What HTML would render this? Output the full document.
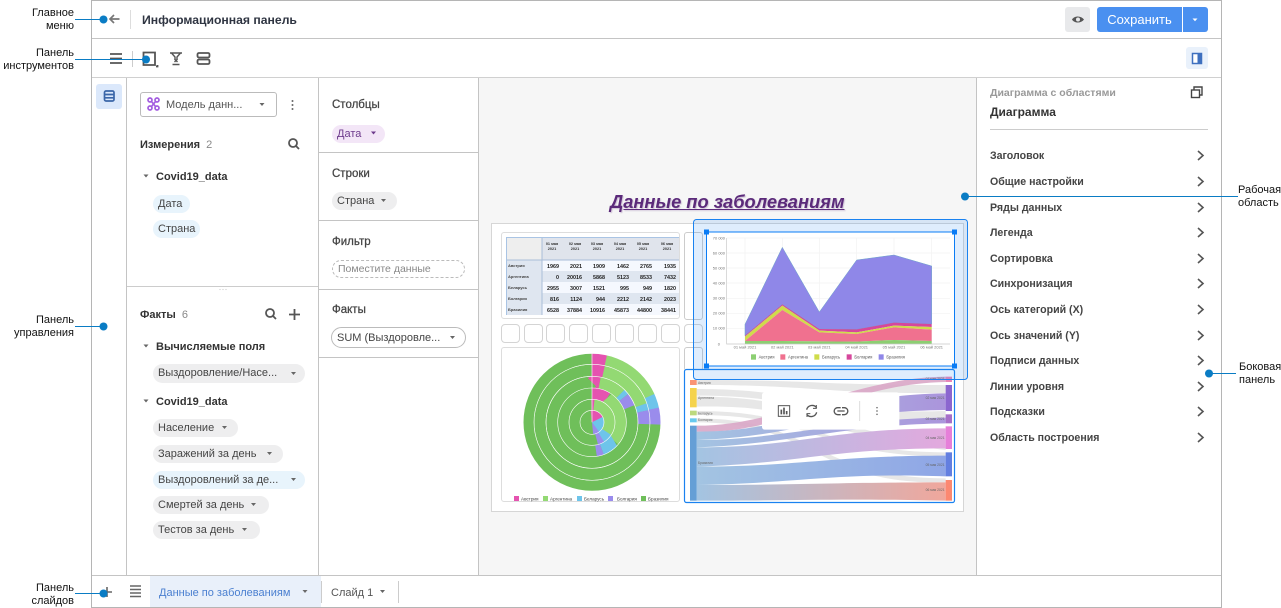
<!DOCTYPE html>
<html lang="ru"><head><meta charset="utf-8"><title>Информационная панель</title>
<style>
html,body{margin:0;padding:0;background:#fff}
#p{position:relative;width:1281px;height:608px;overflow:hidden;background:#fff;font-family:"Liberation Sans","Noto Sans CJK JP",sans-serif;color:#333}
.t{position:absolute;white-space:nowrap;height:14px;line-height:14px;font-size:11px;margin-top:1px}
.b{font-weight:bold}
.s{font-size:11.5px;-webkit-text-stroke:.25px #444;color:#444}
.l{position:absolute;background:#c4c4c4}
.r{position:absolute;box-sizing:border-box}
.chip{position:absolute;box-sizing:border-box;border-radius:10px;background:#eeeeef;font-size:11px;line-height:19px;padding-left:5px;white-space:nowrap;color:#444}
.ann{position:absolute;white-space:nowrap;font-size:11px;line-height:13px;color:#111}
.ann.a{text-align:right;right:1207px}
svg{position:absolute;left:0;top:0}
.rl{position:absolute;left:990px;font-size:10.6px;font-weight:bold;color:#444;height:14px;line-height:14px;white-space:nowrap;margin-top:1px}
.sq{position:absolute;box-sizing:border-box;top:324px;width:19px;height:19px;border:1px solid #d4d4d4;border-radius:4px}
</style></head><body><div id="p">

<!-- structure -->
<div class="r" style="left:479px;top:78px;width:497px;height:497px;background:#f6f6f6"></div>
<div class="l" style="left:91px;top:0;width:1px;height:608px;background:#b5b5b5"></div>
<div class="l" style="left:1221px;top:0;width:1px;height:608px;background:#b5b5b5"></div>
<div class="l" style="left:91px;top:607px;width:1131px;height:1px;background:#b5b5b5"></div>
<div class="l" style="left:91px;top:0;width:1131px;height:1px;background:#b5b5b5"></div>
<div class="l" style="left:92px;top:38px;width:1129px;height:1px"></div>
<div class="l" style="left:92px;top:77px;width:1129px;height:1px;background:#d0d0d0"></div>
<div class="l" style="left:92px;top:575px;width:1129px;height:1px"></div>
<div class="l" style="left:126px;top:78px;width:1px;height:497px"></div>
<div class="l" style="left:318px;top:78px;width:1px;height:497px"></div>
<div class="l" style="left:478px;top:78px;width:1px;height:497px"></div>
<div class="l" style="left:976px;top:78px;width:1px;height:497px"></div>

<!-- header -->
<div class="l" style="left:130px;top:10px;width:1px;height:19px;background:#ddd"></div>
<div class="t b" style="left:142px;top:12px;font-size:12.2px;color:#2f3542">Информационная панель</div>
<div class="r" style="left:1065px;top:7px;width:25px;height:25px;background:#e8e9eb;border-radius:3px"></div>
<div class="r" style="left:1097px;top:7px;width:85px;height:25px;background:#4a90f0;border-radius:3px 0 0 3px;color:#fff;font-size:13px;line-height:26px;text-align:center">Сохранить</div>
<div class="r" style="left:1183px;top:7px;width:25px;height:25px;background:#4a90f0;border-radius:0 3px 3px 0"></div>
<div class="r" style="left:1186px;top:47px;width:22px;height:22px;background:#e9f1fb;border-radius:3px"></div>
<div class="l" style="left:132px;top:51px;width:1px;height:16px;background:#ccc"></div>
<div class="r" style="left:96px;top:84px;width:26px;height:25px;background:#dbe8fb;border-radius:3px"></div>

<!-- left panel -->
<div class="r" style="left:140px;top:92px;width:137px;height:25px;border:1px solid #bbb;border-radius:3px"></div>
<div class="t" style="left:166px;top:97px;color:#555">Модель данн...</div>
<div class="t b" style="left:140px;top:137px;color:#333">Измерения <span style="font-weight:normal;color:#888">&nbsp;2</span></div>
<div class="t b" style="left:156px;top:169px;color:#333">Covid19_data</div>
<div class="chip" style="left:153px;top:195px;width:37px;height:18px;background:#e8f4fc">Дата</div>
<div class="chip" style="left:153px;top:220px;width:47px;height:18px;background:#e8f4fc">Страна</div>
<div class="l" style="left:127px;top:286px;width:191px;height:1px;background:#ccc"></div>
<div class="t b" style="left:140px;top:307px">Факты <span style="font-weight:normal;color:#888">&nbsp;6</span></div>
<div class="t b" style="left:156px;top:339px">Вычисляемые поля</div>
<div class="chip" style="left:153px;top:364px;width:152px;height:19px">Выздоровление/Насе...</div>
<div class="t b" style="left:156px;top:394px">Covid19_data</div>
<div class="chip" style="left:153px;top:419px;width:85px;height:18px">Население</div>
<div class="chip" style="left:153px;top:445px;width:130px;height:18px">Заражений за день</div>
<div class="chip" style="left:153px;top:471px;width:152px;height:18px;background:#e8f4fc">Выздоровлений за де...</div>
<div class="chip" style="left:153px;top:496px;width:116px;height:18px">Смертей за день</div>
<div class="chip" style="left:153px;top:521px;width:107px;height:18px">Тестов за день</div>

<!-- settings -->
<div class="t s" style="left:332px;top:97px">Столбцы</div>
<div class="chip" style="left:332px;top:125px;width:53px;height:18px;background:#f3e6f7;color:#6d3a8c">Дата</div>
<div class="l" style="left:319px;top:152px;width:159px;height:1px"></div>
<div class="t s" style="left:332px;top:166px">Строки</div>
<div class="chip" style="left:332px;top:192px;width:65px;height:18px">Страна</div>
<div class="l" style="left:319px;top:220px;width:159px;height:1px"></div>
<div class="t s" style="left:332px;top:234px">Фильтр</div>
<div class="r" style="left:332px;top:260px;width:133px;height:18px;border:1px dashed #bbb;border-radius:9px;font-size:10.5px;line-height:17px;padding-left:5px;color:#888">Поместите данные</div>
<div class="l" style="left:319px;top:289px;width:159px;height:1px"></div>
<div class="t s" style="left:332px;top:302px">Факты</div>
<div class="r" style="left:331px;top:327px;width:135px;height:21px;border:1px solid #bbb;border-radius:11px;font-size:11px;line-height:20px;padding-left:5px;color:#444;white-space:nowrap">SUM (Выздоровле...</div>
<div class="l" style="left:319px;top:357px;width:159px;height:1px"></div>

<!-- right panel -->
<div class="t b" style="left:990px;top:85px;font-size:10.5px;color:#999">Диаграмма с областями</div>
<div class="t b" style="left:990px;top:104px;font-size:12px;color:#333">Диаграмма</div>
<div class="l" style="left:990px;top:129px;width:218px;height:1px;background:#ccc"></div>
<div class="rl" style="top:148px">Заголовок</div>
<div class="rl" style="top:174px">Общие настройки</div>
<div class="rl" style="top:200px">Ряды данных</div>
<div class="rl" style="top:225px">Легенда</div>
<div class="rl" style="top:251px">Сортировка</div>
<div class="rl" style="top:276px">Синхронизация</div>
<div class="rl" style="top:302px">Ось категорий (X)</div>
<div class="rl" style="top:328px">Ось значений (Y)</div>
<div class="rl" style="top:353px">Подписи данных</div>
<div class="rl" style="top:379px">Линии уровня</div>
<div class="rl" style="top:404px">Подсказки</div>
<div class="rl" style="top:430px">Область построения</div>

<!-- bottom -->
<div class="r" style="left:150px;top:576px;width:171px;height:31px;background:#e9f0fa"></div>
<div class="t" style="left:159px;top:585px;color:#4a7fd0">Данные по заболеваниям</div>
<div class="t" style="left:331px;top:585px;color:#555">Слайд 1</div>
<div class="l" style="left:321px;top:581px;width:1px;height:22px;background:#ccc"></div>
<div class="l" style="left:398px;top:581px;width:1px;height:22px;background:#ccc"></div>

<!-- canvas -->
<div class="t" style="left:610px;top:190px;height:22px;line-height:22px;font-size:18.3px;font-weight:bold;font-style:italic;color:#5b2a7a;text-decoration:underline;text-shadow:1px 1px 1px rgba(90,40,120,.25)">Данные по заболеваниям</div>
<div class="r" style="left:491px;top:223px;width:473px;height:289px;background:#fff;border:1px solid #d6d6d6"></div>
<div class="r" style="left:501px;top:232px;width:179px;height:87px;border:1px solid #ddd;border-radius:3px;background:#fff"></div>
<div class="r" style="left:684px;top:232px;width:19px;height:88px;border:1px solid #ccc;border-radius:3px"></div>
<div class="sq" style="left:501px"></div>
<div class="sq" style="left:524px"></div>
<div class="sq" style="left:546px"></div>
<div class="sq" style="left:569px"></div>
<div class="sq" style="left:592px"></div>
<div class="sq" style="left:615px"></div>
<div class="sq" style="left:638px"></div>
<div class="sq" style="left:661px"></div>
<div class="sq" style="left:684px"></div>
<div class="r" style="left:501px;top:347px;width:179px;height:155px;border:1px solid #ddd;border-radius:3px;background:#fff"></div>
<div class="r" style="left:684px;top:347px;width:19px;height:24px;border:1px solid #ccc;border-radius:3px"></div>

<svg width="1281" height="608" viewBox="0 0 1281 608" font-family="'Liberation Sans',sans-serif">
<!-- table -->
<g>
<rect x="506.500" y="237.500" width="172" height="77" fill="#e8eff9" stroke="#a9c4e4" stroke-width="1"/>
<rect x="507" y="238" width="35" height="22" fill="#eeeeee"/>
<rect x="542" y="238" width="137" height="22" fill="#e0e4ec"/>
<rect x="507" y="260" width="35" height="55" fill="#dfe6f0"/>
<rect x="542" y="260" width="137" height="11" fill="#f5f8fe"/>
<rect x="542" y="271" width="137" height="11" fill="#dfe6f0"/>
<rect x="542" y="282" width="137" height="11" fill="#f5f8fe"/>
<rect x="542" y="293" width="137" height="11" fill="#dfe6f0"/>
<rect x="542" y="304" width="137" height="11" fill="#f5f8fe"/>
<line x1="542" y1="238" x2="542" y2="315" stroke="#a9bdd8"/>
<line x1="507" y1="260" x2="679" y2="260" stroke="#a9bdd8"/>
<g font-size="3.8" font-weight="bold" fill="#333" text-anchor="middle">
<text x="552" y="245">01 мая</text><text x="552" y="250">2021</text>
<text x="575" y="245">02 мая</text><text x="575" y="250">2021</text>
<text x="597" y="245">03 мая</text><text x="597" y="250">2021</text>
<text x="620" y="245">04 мая</text><text x="620" y="250">2021</text>
<text x="643" y="245">05 мая</text><text x="643" y="250">2021</text>
<text x="667" y="245">06 мая</text><text x="667" y="250">2021</text>
</g>
<g font-size="4" font-weight="bold" fill="#444">
<text x="508" y="267">Австрия</text><text x="508" y="278">Аргентина</text><text x="508" y="289">Беларусь</text><text x="508" y="300">Болгария</text><text x="508" y="311">Бразилия</text>
</g>
<g font-size="5.400" fill="#222" font-weight="bold" text-anchor="end">
<text x="559" y="268">1969</text><text x="582" y="268">2021</text><text x="605" y="268">1909</text><text x="629" y="268">1462</text><text x="652" y="268">2765</text><text x="676" y="268">1935</text>
<text x="559" y="279">0</text><text x="582" y="279">20016</text><text x="605" y="279">5868</text><text x="629" y="279">5123</text><text x="652" y="279">8533</text><text x="676" y="279">7432</text>
<text x="559" y="290">2955</text><text x="582" y="290">3007</text><text x="605" y="290">1521</text><text x="629" y="290">995</text><text x="652" y="290">949</text><text x="676" y="290">1820</text>
<text x="559" y="301">816</text><text x="582" y="301">1124</text><text x="605" y="301">944</text><text x="629" y="301">2212</text><text x="652" y="301">2142</text><text x="676" y="301">2023</text>
<text x="559" y="312">6528</text><text x="582" y="312">37884</text><text x="605" y="312">10916</text><text x="629" y="312">45873</text><text x="652" y="312">44800</text><text x="676" y="312">38441</text>
</g>
</g>

<!-- donut -->
<g transform="translate(592,422.300)" fill="none">
<circle r="63.500" stroke="#6fbf5a" stroke-width="11"/>
<circle r="63.500" stroke="#e553b0" stroke-width="11" pathLength="360" stroke-dasharray="13 347" transform="rotate(-90)"/>
<circle r="63.500" stroke="#93d973" stroke-width="11" pathLength="360" stroke-dasharray="53 307" transform="rotate(-77)"/>
<circle r="63.500" stroke="#6ec4ea" stroke-width="11" pathLength="360" stroke-dasharray="12 348" transform="rotate(-24)"/>
<circle r="63.500" stroke="#9a8cec" stroke-width="11" pathLength="360" stroke-dasharray="14 346" transform="rotate(-12)"/>

<circle r="52" stroke="#6fbf5a" stroke-width="11.600"/>
<circle r="52" stroke="#e553b0" stroke-width="11.600" pathLength="360" stroke-dasharray="13 347" transform="rotate(-90)"/>
<circle r="52" stroke="#93d973" stroke-width="11.600" pathLength="360" stroke-dasharray="58 302" transform="rotate(-77)"/>
<circle r="52" stroke="#6ec4ea" stroke-width="11.600" pathLength="360" stroke-dasharray="7 353" transform="rotate(-19)"/>
<circle r="52" stroke="#9a8cec" stroke-width="11.600" pathLength="360" stroke-dasharray="14 346" transform="rotate(-12)"/>

<circle r="40" stroke="#6fbf5a" stroke-width="11.600"/>
<circle r="40" stroke="#e553b0" stroke-width="11.600" pathLength="360" stroke-dasharray="11 349" transform="rotate(-90)"/>
<circle r="40" stroke="#93d973" stroke-width="11.600" pathLength="360" stroke-dasharray="34 326" transform="rotate(-79)"/>
<circle r="40" stroke="#6ec4ea" stroke-width="11.600" pathLength="360" stroke-dasharray="7 353" transform="rotate(-45)"/>
<circle r="40" stroke="#9a8cec" stroke-width="11.600" pathLength="360" stroke-dasharray="16 344" transform="rotate(-38)"/>

<circle r="28.700" stroke="#6fbf5a" stroke-width="11.600"/>
<circle r="28.700" stroke="#e553b0" stroke-width="11.600" pathLength="360" stroke-dasharray="32 328" transform="rotate(-90)"/>
<circle r="28.700" stroke="#93d973" stroke-width="11.600" pathLength="360" stroke-dasharray="98 262" transform="rotate(-58)"/>
<circle r="28.700" stroke="#6ec4ea" stroke-width="11.600" pathLength="360" stroke-dasharray="30 330" transform="rotate(40)"/>
<circle r="28.700" stroke="#9a8cec" stroke-width="11.600" pathLength="360" stroke-dasharray="12 348" transform="rotate(70)"/>

<circle r="17.400" stroke="#6fbf5a" stroke-width="11"/>
<circle r="17.400" stroke="#e553b0" stroke-width="11" pathLength="360" stroke-dasharray="8 352" transform="rotate(-90)"/>
<circle r="17.400" stroke="#93d973" stroke-width="11" pathLength="360" stroke-dasharray="117 243" transform="rotate(-82)"/>
<circle r="17.400" stroke="#6ec4ea" stroke-width="11" pathLength="360" stroke-dasharray="25 335" transform="rotate(35)"/>
<circle r="17.400" stroke="#9a8cec" stroke-width="11" pathLength="360" stroke-dasharray="15 345" transform="rotate(60)"/>

<circle r="6" stroke="#6fbf5a" stroke-width="12"/>
<circle r="6" stroke="#e553b0" stroke-width="12" pathLength="360" stroke-dasharray="70 290" transform="rotate(-90)"/>
<circle r="6" stroke="#6ec4ea" stroke-width="12" pathLength="360" stroke-dasharray="80 280" transform="rotate(-20)"/>
<circle r="6" stroke="#9a8cec" stroke-width="12" pathLength="360" stroke-dasharray="25 335" transform="rotate(60)"/>

<g stroke="#fff" stroke-width=".6"><circle r="12"/><circle r="23"/><circle r="34.300"/><circle r="46"/><circle r="58"/><circle r="69" stroke-width="1"/></g>
<line x1="0" y1="0" x2="0" y2="-69" stroke="#fff" stroke-width=".6"/>
</g>
<g font-size="4.600" fill="#444">
<rect x="514" y="496" width="5" height="5" fill="#e553b0"/><text x="521" y="500.500">Австрия</text>
<rect x="543" y="496" width="5" height="5" fill="#93d973"/><text x="550" y="500.500">Аргентина</text>
<rect x="577" y="496" width="5" height="5" fill="#6ec4ea"/><text x="584" y="500.500">Беларусь</text>
<rect x="608" y="496" width="5" height="5" fill="#9a8cec"/><text x="617" y="500.500">Болгария</text>
<rect x="641" y="496" width="5" height="5" fill="#6fbf5a"/><text x="648" y="500.500">Бразилия</text>
</g>

<!-- sankey -->
<defs>
<linearGradient id="g1" x1="0" x2="1" y1="0" y2="0"><stop offset="0" stop-color="#a3c4e2"/><stop offset="1" stop-color="#e3a9de"/></linearGradient>
<linearGradient id="g2" x1="0" x2="1" y1="0" y2="0"><stop offset="0" stop-color="#a3c4e2"/><stop offset="1" stop-color="#8fa6e6"/></linearGradient>
<linearGradient id="g3" x1="0" x2="1" y1="0" y2="0"><stop offset="0" stop-color="#a3c4e2"/><stop offset="1" stop-color="#f0a79c"/></linearGradient>
<linearGradient id="g4" x1="0" x2="1" y1="0" y2="0"><stop offset="0" stop-color="#a3c4e2"/><stop offset="1" stop-color="#ab95dc"/></linearGradient>
</defs>
<rect x="684.500" y="369.500" width="270" height="133" rx="2" fill="#fff"/>
<g transform="translate(682,365) scale(.33333)">
<g fill="#e7e7e7">
<path d="M44 45C400 45 400 60 791 60V85C400 85 400 60 44 60Z"/>
<path d="M44 72C400 72 400 150 791 138V165C400 175 400 92 44 92Z"/>
<path d="M44 95C400 95 400 190 791 240V255C400 210 400 118 44 125Z"/>
<path d="M44 138C400 138 400 260 791 262V275C400 270 400 150 44 150Z"/>
<path d="M44 160C400 160 400 340 791 340V352C400 360 400 172 44 172Z"/>
</g>
<path d="M44 182C300 182 500 40 791 35V51C500 56 300 210 44 200Z" fill="#d9a6c6" opacity=".9"/>
<path d="M44 200C350 200 450 88 791 85V135C450 138 350 215 44 225Z" fill="url(#g4)"/>
<path d="M44 225C300 225 500 160 791 158V175C500 178 300 240 44 247Z" fill="url(#g4)"/>
<path d="M44 247C350 247 450 190 791 190V250C450 250 350 295 44 305Z" fill="url(#g1)"/>
<path d="M44 305C350 305 450 272 791 272V334C450 322 350 355 44 360Z" fill="url(#g2)"/>
<path d="M44 360C350 360 450 352 791 352V407C450 400 350 407 44 407Z" fill="url(#g3)"/>
<rect x="24" y="45" width="20" height="15" fill="#fa9474"/>
<rect x="24" y="69" width="20" height="58" fill="#f5d34c"/>
<rect x="24" y="137" width="20" height="14" fill="#bcd97e"/>
<rect x="24" y="160" width="20" height="12" fill="#69c9ee"/>
<rect x="24" y="182" width="20" height="225" fill="#659fd6"/>
<rect x="791" y="35" width="19" height="16" fill="#e986b8"/>
<rect x="791" y="60" width="19" height="78" fill="#8b66cf"/>
<rect x="791" y="148" width="19" height="27" fill="#a66fc8"/>
<rect x="791" y="184" width="19" height="68" fill="#e67fd9"/>
<rect x="791" y="262" width="19" height="72" fill="#637fe0"/>
<rect x="791" y="345" width="19" height="62" fill="#fc8871"/>
<g font-size="10" fill="#666"><text x="48" y="57">Австрия</text><text x="48" y="102">Аргентина</text><text x="48" y="148">Беларусь</text><text x="48" y="168">Болгария</text><text x="48" y="297">Бразилия</text>
<text x="731" y="45">01 мая 2021</text><text x="731" y="102">02 мая 2021</text><text x="731" y="165">03 мая 2021</text><text x="731" y="222">04 мая 2021</text><text x="731" y="303">05 мая 2021</text><text x="731" y="378">06 мая 2021</text></g>
<rect x="240" y="82" width="412" height="112" rx="8" fill="#fff"/>
<g fill="none" stroke="#555" stroke-width="3">
<rect x="289" y="122" width="34" height="32"/>
<path d="M298 148V134M306 148V128M314 148V138" stroke-width="5"/>
<path d="M374 134A17 17 0 0 1 404 128M404 142A17 17 0 0 1 374 148" stroke-width="4"/>
<path d="M403 120V130H393M375 156V146H385" stroke-width="3"/>
<path d="M476 128H467A10 10 0 0 0 467 149H476M480 128H487A10 10 0 0 1 487 149H480M466 138H488" stroke-width="4"/>
<line x1="533" y1="108" x2="533" y2="168" stroke="#ddd"/>
</g>
<g fill="#777"><circle cx="585" cy="128" r="2.500"/><circle cx="585" cy="138" r="2.500"/><circle cx="585" cy="148" r="2.500"/></g>
</g>

<!-- selected chart frame (translucent, over neighbouring cards) -->
<rect x="693.500" y="219.500" width="274" height="160" rx="3" fill="#1a82f0" fill-opacity=".14" stroke="#1a82f0"/>
<rect x="684.500" y="369.500" width="270" height="133" rx="2" fill="none" stroke="#1a82f0" stroke-width="1.200"/>
<rect x="706.500" y="232" width="248" height="134" fill="#fff" stroke="#0a7cf5"/>
<g fill="#0a7cf5"><rect x="704" y="229.500" width="5" height="5"/><rect x="952" y="229.500" width="5" height="5"/><rect x="704" y="363.500" width="5" height="5"/><rect x="952" y="363.500" width="5" height="5"/></g>
<g transform="translate(690,215) scale(.33333)">
<g stroke="#f2f2f2" stroke-width="2"><path d="M110 69H780M110 114H780M110 159H780M110 204H780M110 250H780M110 295H780M110 340H780M165 69V387M277 69V387M388 69V387M500 69V387M612 69V387M725 69V387" fill="none"/></g>
<path d="M165 328 277 97 388 291 500 135 612 120 725 153V327L612 323 500 343 388 342 277 268 165 362Z" fill="#8f87e8" stroke="#6aa4c8" stroke-width="1.500"/>
<path d="M165 362 277 268 388 342 500 343 612 323 725 327V336L612 332 500 352 388 347 277 272 165 365Z" fill="#d6479c"/>
<path d="M165 365 277 272 388 347 500 352 612 332 725 336V344L612 337 500 357 388 352 277 285 165 378Z" fill="#cfdc4a"/>
<path d="M165 378 277 285 388 352 500 357 612 337 725 344V378L612 375 500 380 388 379 277 378 165 378Z" fill="#f0718f"/>
<path d="M165 378 277 378 388 379 500 380 612 375 725 378V387H165Z" fill="#8ccf72"/>
<path d="M110 69V387H780" fill="none" stroke="#c8c8c8" stroke-width="2"/>
<g font-size="12" fill="#777" text-anchor="end">
<text x="105" y="73">70 000</text><text x="105" y="118">60 000</text><text x="105" y="163">50 000</text><text x="105" y="208">40 000</text><text x="105" y="254">30 000</text><text x="105" y="299">20 000</text><text x="105" y="344">10 000</text><text x="90" y="391">0</text>
</g>
<g font-size="12" fill="#777" text-anchor="middle">
<text x="165" y="401">01 май 2021</text><text x="277" y="401">02 май 2021</text><text x="388" y="401">03 май 2021</text><text x="500" y="401">04 май 2021</text><text x="612" y="401">05 май 2021</text><text x="725" y="401">06 май 2021</text>
</g>
<g font-size="12.500" fill="#555">
<rect x="183" y="418" width="15" height="16" fill="#8ccf72"/><text x="206" y="431">Австрия</text>
<rect x="271" y="418" width="15" height="16" fill="#f0718f"/><text x="294" y="431">Аргентина</text>
<rect x="373" y="418" width="15" height="16" fill="#cfdc4a"/><text x="396" y="431">Беларусь</text>
<rect x="470" y="418" width="15" height="16" fill="#d6479c"/><text x="493" y="431">Болгария</text>
<rect x="566" y="418" width="15" height="16" fill="#8f87e8"/><text x="589" y="431">Бразилия</text>
</g>
</g>

<!-- icons -->
<g fill="none" stroke="#777" stroke-width="1.700"><path d="M119.500 19H110M114 15 110 19 114 23"/></g>
<g fill="none" stroke="#555" stroke-width="1.800">
<path d="M110 54H122M110 58.500H122M110 63H122"/>
<path d="M143.500 65V52.500H155V65ZM156 66.500H157.500V65"/>
<path d="M170 53H182M171.500 53 175 57V60M180.500 53 177 57V60M172.500 64.500H179.500M174.500 59 177.500 62M177.500 59 174.500 62" stroke-width="1.400"/>
<rect x="197.500" y="53" width="12" height="4.500" rx="1.500"/><rect x="197.500" y="59.500" width="12" height="4.500" rx="1.500"/>
</g>
<g fill="none" stroke="#3b66a8" stroke-width="1.700"><rect x="104.500" y="91" width="9.500" height="10" rx="1.500"/><path d="M104.500 94.500H114M104.500 97.800H114"/></g>
<rect x="1192.500" y="53.500" width="9" height="10" fill="#fff" stroke="#3e70bf" stroke-width="1.500"/><rect x="1197.500" y="53.500" width="4" height="10" fill="#3e70bf"/>
<path d="M1072 19.500C1074.500 15.500 1081 15.500 1084 19.500 1081 23.500 1074.500 23.500 1072 19.500Z" fill="#555"/><circle cx="1078" cy="19.500" r="2" fill="#e8e9eb"/>
<path d="M1192.500 18.500h5l-2.500 2.800z" fill="#fff"/>
<g fill="none" stroke="#444" stroke-width="1.400">
<rect x="1191.500" y="90" width="8" height="7.500"/><path d="M1194 90V87H1202V95H1199.500"/>
</g>
<g fill="none" stroke="#555" stroke-width="1.600"><path d="M1198 151 1203 155.500 1198 160M1198 177 1203 181.500 1198 186M1198 203 1203 207.500 1198 212M1198 228 1203 232.500 1198 237M1198 254 1203 258.500 1198 263M1198 279 1203 283.500 1198 288M1198 305 1203 309.500 1198 314M1198 331 1203 335.500 1198 340M1198 356 1203 360.500 1198 365M1198 382 1203 386.500 1198 391M1198 407 1203 411.500 1198 416M1198 433 1203 437.500 1198 442"/></g>
<g fill="none" stroke="#a45ee0" stroke-width="1.700"><circle cx="150" cy="100" r="2"/><circle cx="157" cy="100" r="2"/><circle cx="150" cy="108" r="2"/><circle cx="157" cy="108" r="2"/><path d="M151.500 101.500 155.500 106.500M155.500 101.500 151.500 106.500"/></g>
<g fill="#666"><path d="M259.500 103h5l-2.500 3z"/><circle cx="292.500" cy="101" r="1"/><circle cx="292.500" cy="105" r="1"/><circle cx="292.500" cy="109" r="1"/></g>
<g fill="none" stroke="#555" stroke-width="1.800"><circle cx="293" cy="143" r="4"/><path d="M296 146 299 149"/><circle cx="270" cy="313" r="4"/><path d="M273 316 276 319"/><path d="M289 314.500H300M294.500 309V320"/></g>
<g fill="#666">
<path d="M143.500 174.500h5l-2.500 3z"/><path d="M143.500 344.500h5l-2.500 3z"/><path d="M143.500 399.500h5l-2.500 3z"/>
<path d="M291 372h5l-2.500 3z"/><path d="M222 426h5l-2.500 3z"/><path d="M267 452h5l-2.500 3z"/><path d="M291 478h5l-2.500 3z"/><path d="M251 503h5l-2.500 3z"/><path d="M242 528h5l-2.500 3z"/>
<path d="M371 131.500h5l-2.500 3z" fill="#6d3a8c"/><path d="M381 199h5l-2.500 3z"/><path d="M450 336h5l-2.500 3z"/>
<path d="M302.500 590h5l-2.500 3z" fill="#6a6a6a"/><path d="M380 590h5l-2.500 3z"/>
</g>
<g fill="#ccc"><circle cx="220" cy="289.500" r=".6"/><circle cx="223" cy="289.500" r=".6"/><circle cx="226" cy="289.500" r=".6"/></g>
<path d="M102 592H112M107 587V597" stroke="#666" stroke-width="1.600" fill="none"/>
<path d="M130 586H141M130 589.500H141M130 593H141M130 596.500H141" stroke="#666" stroke-width="1.500" fill="none"/>

<!-- annotations -->
<g stroke="#0a7cc4" stroke-width="1" fill="#0a7cc4">
<line x1="75" y1="19.500" x2="103" y2="19.500"/><circle cx="103.500" cy="19.500" r="4" stroke="none"/>
<line x1="75" y1="59.500" x2="146" y2="59.500"/><circle cx="146" cy="59.500" r="4" stroke="none"/>
<line x1="75" y1="326.500" x2="103" y2="326.500"/><circle cx="103.500" cy="326.500" r="4" stroke="none"/>
<line x1="75" y1="593.500" x2="103" y2="593.500"/><circle cx="103.500" cy="593.500" r="4" stroke="none"/>
<line x1="965" y1="196.500" x2="1238" y2="196.500"/><circle cx="965" cy="196.500" r="4" stroke="none"/>
<line x1="1209" y1="373.500" x2="1236" y2="373.500"/><circle cx="1209" cy="373.500" r="4" stroke="none"/>
</g>
</svg>

<div class="ann a" style="top:7px">Главное<br>меню</div>
<div class="ann a" style="top:47px">Панель<br>инструментов</div>
<div class="ann a" style="top:314px">Панель<br>управления</div>
<div class="ann a" style="top:582px">Панель<br>слайдов</div>
<div class="ann" style="left:1238px;top:184px">Рабочая<br>область</div>
<div class="ann" style="left:1239px;top:361px">Боковая<br>панель</div>
</div></body></html>
